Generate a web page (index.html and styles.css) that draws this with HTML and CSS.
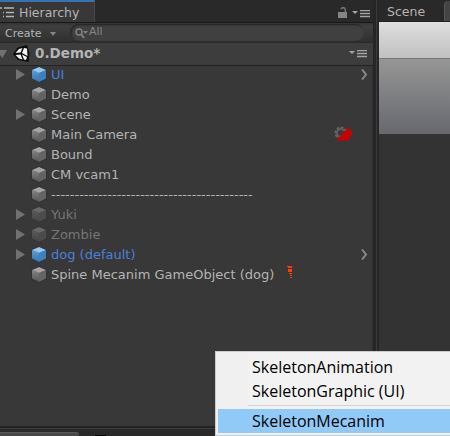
FILE: index.html
```
<!DOCTYPE html>
<html lang="en">
<head>
<meta charset="utf-8">
<title>Hierarchy</title>
<link rel="stylesheet" href="styles.css">
</head>
<body>
<svg width="0" height="0" class="defs" aria-hidden="true">
  <defs>
    <linearGradient id="shade" x2="0" y2="1"><stop stop-color="#858585"/><stop offset="1" stop-color="#555"/></linearGradient>
    <linearGradient id="blueshade" x2="0" y2="1"><stop stop-color="#5c9ed9"/><stop offset="1" stop-color="#3674ae"/></linearGradient>
  </defs>
  <symbol id="cube" viewBox="0 0 16 17">
    <path d="M8 .5 15.5 3.5V13L8 16.8.5 13V3.5z" fill="#282828" opacity=".75"/>
    <path d="M1 4 8 7V16L1 12.5z" fill="url(#shade)"/>
    <path d="M15 4 8 7V16L15 12.5z" fill="#646464"/>
    <path d="M8 1 15 4 8 7 1 4z" fill="#a4a4a4"/>
  </symbol>
  <symbol id="bluecube" viewBox="0 0 16 17">
    <path d="M8 .5 15.5 3.5V13L8 16.8.5 13V3.5z" fill="#203044" opacity=".75"/>
    <path d="M1 4 8 7V16L1 12.5z" fill="url(#blueshade)"/>
    <path d="M15 4 8 7V16L15 12.5z" fill="#3c80c0"/>
    <path d="M8 1 15 4 8 7 1 4z" fill="#98c7ed"/>
  </symbol>
  <symbol id="menu" viewBox="0 0 18 8">
    <path d="M0 1H6L3 4z" fill="#a5a5a5"/>
    <path d="M8 .5H18M8 3.5H18M8 6.5H18" stroke="#a5a5a5" stroke-width="1.5"/>
  </symbol>
</svg>
<main class="editor">
  <section class="hierarchy">
    <header class="tabs">
      <div class="tab">
        <svg class="list" width="15" height="11" viewBox="0 0 15 11"><path d="M0 1H2M4 1H14M3 5.500H4M6 5.500H14M3 9.500H4M6 9.500H14" stroke="#b5b5b5" stroke-width="1.500"/></svg>
        <span>Hierarchy</span>
      </div>
      <svg class="lock" width="10" height="12" viewBox="0 0 10 12"><path d="M0 5H9V11H0z" fill="#858585"/><path d="M3 2Q4.500 0 6.500 1 7.500 2 7.500 5" fill="none" stroke="#777" stroke-width="1.500"/></svg>
      <svg class="tabmenu" width="18" height="8"><use href="#menu"/></svg>
    </header>
    <div class="toolbar">
      <span class="create">Create</span><svg class="drop" width="6" height="4"><path d="M0 0H6L3 4z" fill="#858585"/></svg>
      <div class="search">
        <svg width="14" height="11" viewBox="0 0 14 11"><circle cx="4" cy="4" r="3" fill="none" stroke="#808080" stroke-width="1.500"/><path d="M6 6 9 10" stroke="#808080" stroke-width="2"/><path d="M8 3H13L10.500 6z" fill="#808080"/></svg><span>All</span>
      </div>
    </div>
    <div class="scenebar">
      <svg class="fold" width="8" height="9"><path d="M0 0H7L2.500 8 0 5z" fill="#707070"/></svg>
      <svg class="unity" width="17" height="18" viewBox="0 0 17 18">
        <path d="M0 9 4.500 2.500 14 0 16.500 8 15.500 17 5 15z" fill="#0b0b0b"/>
        <path d="M2.500 8 6 4 9.500 3 7.500 7.500zM11 3 14 3.500 14.500 11 9 8zM2.500 10 7.500 9.500 9.500 14.500 6 13.500zM9 9.500 14 12 13 15 11 14.500z" fill="#f4f4f4"/>
      </svg>
      <strong>0.Demo*</strong>
      <svg class="barmenu" width="18" height="8"><use href="#menu"/></svg>
    </div>
    <ul class="tree">
      <li class="prefab"><i class="arrow"></i><svg class="cube"><use href="#bluecube"/></svg><span class="t1">UI</span><svg class="chev" viewBox="0 0 7 11"><path d="M1 .5 5 5.500 1 10.500" fill="none" stroke="#888" stroke-width="2"/></svg></li>
      <li><i></i><svg class="cube"><use href="#cube"/></svg><span>Demo</span></li>
      <li><i class="arrow"></i><svg class="cube"><use href="#cube"/></svg><span>Scene</span></li>
      <li><i></i><svg class="cube"><use href="#cube"/></svg><span>Main Camera</span>
        <svg class="cine" width="19" height="17" viewBox="0 0 19 17"><circle cx="7" cy="8" r="5" fill="none" stroke="#686464" stroke-width="3" stroke-dasharray="2.500 1.300"/><circle cx="7" cy="8" r="4" fill="none" stroke="#625c5c" stroke-width="2"/><path d="M2 15.500 15 1.500V6L17 4.500 18 6V11L16 11.500 15 10V15.500z" fill="#c90000"/></svg></li>
      <li><i></i><svg class="cube"><use href="#cube"/></svg><span>Bound</span></li>
      <li><i></i><svg class="cube"><use href="#cube"/></svg><span>CM vcam1</span></li>
      <li><i></i><svg class="cube"><use href="#cube"/></svg><span class="dashes">-------------------------------------------</span></li>
      <li class="off"><i class="arrow"></i><svg class="cube"><use href="#cube"/></svg><span>Yuki</span></li>
      <li class="off"><i class="arrow"></i><svg class="cube"><use href="#cube"/></svg><span>Zombie</span></li>
      <li class="prefab"><i class="arrow"></i><svg class="cube"><use href="#bluecube"/></svg><span>dog (default)</span><svg class="chev" viewBox="0 0 7 11"><path d="M1 .5 5 5.500 1 10.500" fill="none" stroke="#888" stroke-width="2"/></svg></li>
      <li><i></i><svg class="cube"><use href="#cube"/></svg><span class="spine">Spine Mecanim GameObject (dog)</span>
        <svg class="bone" width="6" height="13" viewBox="0 0 6 13"><path d="M0 0H5V2H1V1H0zM1 3H5V6H1zM2 7H5V8H2zM3 9H5V10H3zM3 11H5V12H3z" fill="#fb4000"/></svg></li>
    </ul>
  </section>
  <section class="viewer">
    <header><span>Scene</span><div class="nexttab"></div></header>
    <div class="sky"></div>
    <div class="ground"></div>
  </section>
  <footer class="dock"><div class="docktab"></div><div class="mark"></div></footer>
</main>
<nav class="popup">
  <div class="item">SkeletonAnimation</div>
  <div class="item graphic">SkeletonGraphic (UI)</div>
  <hr>
  <div class="item active">SkeletonMecanim</div>
</nav>
</body>
</html>
```
FILE: styles.css
```
* { box-sizing: border-box; }
body { margin: 0; width: 450px; height: 436px; overflow: hidden; background: #292929; color: #b4b4b4; font: 13px/20px "DejaVu Sans", sans-serif; }
svg { display: block; flex: none; }
.defs { position: absolute; }
.editor { display: grid; grid-template-columns: 379px 71px; grid-template-rows: 426px 10px; height: 436px; }
.hierarchy { background: #383838; border-right: 6px solid #262626; box-shadow: inset -1px 0 #303030; position: relative; }
.hierarchy::after { content: ""; position: absolute; right: -4px; top: 0; width: 1px; height: 426px; background: #3b3b3b; }
.tabs { height: 22px; background: #292929; display: flex; align-items: flex-start; }
.tab { display: flex; width: 95px; height: 22px; border-top: 2px solid #3a72b0; background: #383838; border-right: 1px solid #494949; line-height: 21px; font-size: 12.500px; }
.tab .list { margin: 5px 4px 0 0; }
.lock { margin: 7px 0 0 243px; }
.tabmenu { margin: 10px 0 0 4px; }
.toolbar { height: 21px; background: linear-gradient(#333, #3f3f3f 15%, #303030 90%, #292929); border-top: 1px solid #191919; display: flex; font-size: 11px; line-height: 21px; }
.create { width: 50px; padding-left: 5px; }
.drop { margin: 9px 4px 0 0; }
.search { margin: 1px 0 0 10px; width: 294px; height: 17px; border-radius: 9px; background: #404040; box-shadow: inset 1px 1px 2px #202020; display: flex; padding-left: 5px; line-height: 16px; color: #858585; }
.search svg { margin-top: 4px; }
.scenebar { height: 23px; background: #3d3d3d; border-bottom: 1px solid #222; display: flex; }
.fold { margin-top: 7px; }
.unity { margin: 2px 5px 0 5px; }
.scenebar strong { font-size: 13.500px; line-height: 21px; width: 72px; }
.barmenu { margin: 7px 0 0 242px; }
.tree { list-style: none; margin: 0; padding: 0; }
.tree li { height: 20px; display: flex; line-height: 17px; white-space: pre; }
.tree i { width: 16px; height: 20px; margin-right: 15px; flex: none; }
.tree .arrow { width: 9px; height: 11px; margin: 3px 7px 0 16px; background: #717171; clip-path: polygon(0 0, 100% 50%, 0 100%); }
.tree i:not(.arrow) { width: 32px; margin: 0; }
.tree .cube { width: 16px; height: 17px; margin: 0 4px 0 -1px; }
.prefab { color: #4a80da; }
.off { color: #767676; }
.off .cube { opacity: .45; }
.tree .chev { width: 7px; height: 11px; margin: 3px 5px 0 auto; }
.cine { margin: -1px 20px 0 auto; }
.bone { margin: 0 0 0 13px; }
.viewer { background: #333; }
.viewer header { height: 22px; background: #292929; display: flex; justify-content: space-between; padding-left: 8px; line-height: 24px; font-size: 12.500px; border-bottom: 1px solid #202020; }
.nexttab { width: 6px; margin-top: 1px; background: #444; border-left: 1px solid #555; border-radius: 4px 0 0; }
.sky { height: 36px; background: linear-gradient(#dedede, #c0c0c0); }
.ground { height: 76px; border-top: 1px solid #777; background: linear-gradient(#969696, #66686e); }
.dock { grid-column: 1 / 3; background: #292929; border-top: 2px solid #222; box-shadow: inset 0 1px #3c3c3c; display: flex; padding-top: 4px; }
.docktab { width: 79px; height: 4px; background: #484848; border-top: 1px solid #5a5a5a; border-radius: 0 3px 0 0; }
.mark { width: 11px; height: 1px; margin: 3px 0 0 16px; background: #050505; }
.popup { position: absolute; left: 215px; top: 351px; width: 240px; height: 85px; background: linear-gradient(90deg, #f0f0f0 32px, #f2f2f2 32px); border: 1px solid #ccc; padding: 3px 2px 1px; color: #000; font: 16px/24px "Open Sans", sans-serif; }
.item { height: 24px; padding-left: 34px; white-space: nowrap; }
.popup hr { border: 0; height: 1px; background: #d5d5d5; margin: 2px 0 3px 30px; }
.active { background: #91c9f7; }
```
